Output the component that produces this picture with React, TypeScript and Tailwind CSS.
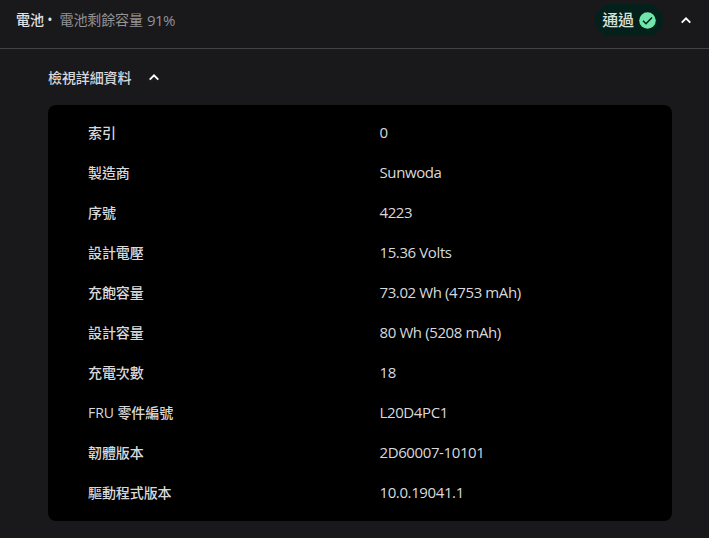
interface Detail {
  label: string
  value: string
}

const details: Detail[] = [
  { label: "索引", value: "0" },
  { label: "製造商", value: "Sunwoda" },
  { label: "序號", value: "4223" },
  { label: "設計電壓", value: "15.36 Volts" },
  { label: "充飽容量", value: "73.02 Wh (4753 mAh)" },
  { label: "設計容量", value: "80 Wh (5208 mAh)" },
  { label: "充電次數", value: "18" },
  { label: "FRU 零件編號", value: "L20D4PC1" },
  { label: "韌體版本", value: "2D60007-10101" },
  { label: "驅動程式版本", value: "10.0.19041.1" },
]

function ChevronUp({ className }: { className?: string }) {
  return (
    <svg viewBox="0 0 10 7" fill="none" stroke="currentColor" strokeWidth="1.9" className={className}>
      <path d="M.7 5.7 5 1.4 9.3 5.7" />
    </svg>
  )
}

export default function App() {
  return (
    <main className="h-[538px] w-[709px] overflow-hidden bg-[#19191c] font-['Open_Sans','Noto_Sans_CJK_TC',sans-serif] text-[#d9d9dc]">
      <header className="flex h-[49px] items-center border-b border-[#434347] pr-[18px] pb-[8px] pl-4">
        <h1 className="flex text-sm leading-5 whitespace-nowrap text-[#929297]">
          <span className="mr-[7px] font-medium tracking-[-0.1px] text-[#e4e4e7]">電池 •</span>
          <span className="tracking-[-0.1px]">電池剩餘容量</span>
          <span className="ml-1 text-[15px] tracking-[-0.6px]">91%</span>
        </h1>
        <div className="ml-auto flex h-8 items-center gap-[5px] rounded-full bg-[#04201a] px-[7px]">
          <span className="text-base leading-6 font-medium tracking-[-0.1px] text-[#d9e2de]">通過</span>
          <svg viewBox="0 0 17 17" className="size-[17px]">
            <circle cx="8.5" cy="8.5" r="8.3" fill="#70e6ab" />
            <path d="m4 8.7 3 3 6-6.2" fill="none" stroke="#04201a" strokeWidth="1.5" />
          </svg>
        </div>
        <button className="ml-[18px] text-white">
          <ChevronUp className="h-[7px] w-2.5" />
        </button>
      </header>

      <section className="px-12 pt-[19px]">
        <button className="flex h-5 items-center gap-[18px] text-sm leading-5 font-medium tracking-[-0.1px]">
          檢視詳細資料
          <ChevronUp className="mb-0.5 h-[7px] w-2.5 text-white" />
        </button>
        <dl className="mt-[17px] h-[416px] w-[624px] rounded-lg bg-black px-10 py-2">
          {details.map(({ label, value }) => (
            <div key={label} className="flex h-10 items-center text-sm leading-5">
              <dt className="w-[291.5px] font-medium tracking-[-0.08px]">{label}</dt>
              <dd className="pb-0.5 text-[15px] tracking-[-0.39px]">{value}</dd>
            </div>
          ))}
        </dl>
      </section>
    </main>
  )
}
